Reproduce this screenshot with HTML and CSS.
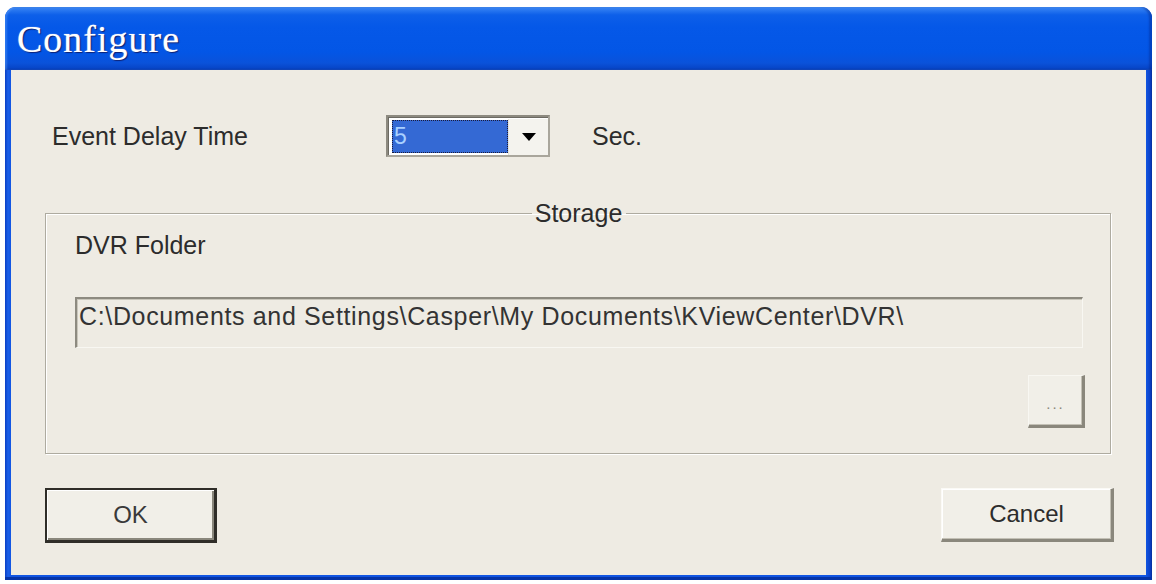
FILE: index.html
```html
<!DOCTYPE html>
<html>
<head>
<meta charset="utf-8">
<title>Configure</title>
<link rel="stylesheet" href="styles.css">
</head>
<body>
<div class="window">
  <div class="titlebar"><span class="title">Configure</span></div>
  <div class="client">
    <div class="row-delay">
      <span class="label">Event Delay Time</span>
      <div class="combo">
        <div class="combo-value"><span>5</span></div>
        <div class="combo-btn">
          <svg width="14" height="8" viewBox="0 0 14 8"><path d="M0 0 H14 L7 8 Z" fill="#000"/></svg>
        </div>
      </div>
      <span class="unit">Sec.</span>
    </div>
    <fieldset class="group">
      <legend>Storage</legend>
      <div class="field-label">DVR Folder</div>
      <div class="textbox">C:\Documents and Settings\Casper\My Documents\KViewCenter\DVR\</div>
      <div class="browse-row"><button class="btn browse">...</button></div>
    </fieldset>
    <div class="buttons">
      <button class="btn ok">OK</button>
      <button class="btn cancel">Cancel</button>
    </div>
  </div>
</div>
</body>
</html>
```

FILE: styles.css
```css
html, body {
  margin: 0;
  padding: 0;
  background: #ffffff;
}

body {
  font-family: "Liberation Sans", Arial, sans-serif;
  color: #2c2c2c;
}

.window {
  margin: 7px 0 0 5px;
  width: 1147px;
  height: 573px;
  box-sizing: border-box;
  border-radius: 11px 11px 0 0;
  background: linear-gradient(to right, #0a3fc4 0px, #1a5fe8 3px, #1155e2 6px, #1155e2 calc(100% - 6px), #0a40c8 calc(100% - 2px), #062e9a 100%);
  padding: 0 6px 5px 6px;
  display: flex;
  flex-direction: column;
  box-shadow: inset 0 -3px 0 #0534a8;
}

.titlebar {
  height: 63px;
  margin: 0 -6px;
  padding: 11px 0 0 12px;
  box-sizing: border-box;
  border-radius: 11px 11px 0 0;
  background: linear-gradient(to bottom, #3f8cf3 0px, #2a78f0 3px, #0d5fe9 8px, #0558e8 20px, #0356e6 45px, #0a52da 56px, #0746c8 61px, #063cb4 63px);
  box-shadow: inset -3px 0 2px rgba(0, 30, 120, 0.35), inset 2px 0 2px rgba(120, 180, 255, 0.35);
}

.title {
  font-family: "Liberation Serif", "Times New Roman", serif;
  font-size: 38px;
  line-height: 42px;
  letter-spacing: 1px;
  color: #ffffff;
  text-shadow: 1px 1px 1px #0b1f72, 0 0 1px #dfe8ff;
}

.client {
  flex: 1;
  background: #eeebe3;
  padding: 0 35px 0 34px;
  display: flex;
  flex-direction: column;
}

.row-delay {
  margin-top: 45px;
  height: 42px;
  display: flex;
  align-items: center;
  padding-left: 7px;
  font-size: 25px;
}

.label {
  width: 334px;
}

.combo {
  width: 164px;
  height: 42px;
  box-sizing: border-box;
  border: 2px solid #8d8a80;
  border-right-color: #a9a69c;
  border-bottom-color: #a9a69c;
  background: #ffffff;
  display: flex;
  padding: 3px 2px 2px 4px;
  box-shadow: inset 1px 1px 0 #6c6a62;
}

.combo-value {
  width: 116px;
  height: 33px;
  box-sizing: border-box;
  background: #3469d4;
  border: 1px dotted #1b1b3a;
  color: #a9d0ff;
  font-size: 23px;
  line-height: 31px;
  padding-left: 1px;
}

.combo-btn {
  flex: 1;
  display: flex;
  align-items: center;
  justify-content: center;
  background: #f4f3ee;
  margin: -1px -2px -2px 0;
  border-left: 1px solid #e4e2da;
}

.unit {
  margin-left: 42px;
}

.group {
  margin: 42px 0 0 0;
  padding: 3px 27px 25px 29px;
  border: 1px solid #aeaba0;
  box-shadow: inset 1px 1px 0 #ffffff, 1px 1px 0 #ffffff;
  min-width: 0;
}

.group legend {
  margin: 0 auto;
  padding: 0 4px 0 3px;
  font-size: 25px;
  line-height: 29px;
}

.field-label {
  font-size: 25px;
  line-height: 29px;
}

.textbox {
  margin-top: 37px;
  height: 51px;
  box-sizing: border-box;
  border-top: 2px solid #8d8a80;
  border-left: 2px solid #8d8a80;
  border-right: 1px solid #f8f7f2;
  border-bottom: 1px solid #f8f7f2;
  box-shadow: inset 1px 1px 0 #c9c6bb;
  background: #eeebe3;
  font-size: 25px;
  line-height: 29px;
  letter-spacing: 0.65px;
  padding: 3px 0 0 2px;
  white-space: nowrap;
  overflow: hidden;
  color: #333333;
}

.browse-row {
  display: flex;
  justify-content: flex-end;
  margin-top: 27px;
  margin-right: -2px;
}

.btn {
  font-family: "Liberation Sans", Arial, sans-serif;
  background: #f1efe8;
  color: #2c2c2c;
  padding: 0;
  margin: 0;
  box-sizing: border-box;
  cursor: default;
}

.browse {
  width: 57px;
  height: 53px;
  border: 1px solid #f8f7f2;
  border-right: 3px solid #8a877c;
  border-bottom: 3px solid #8a877c;
  box-shadow: inset -1px -1px 0 #c3c0b5;
  font-size: 15px;
  color: #8a877c;
  letter-spacing: 2px;
  padding-top: 6px;
}

.buttons {
  margin-top: 34px;
  margin-right: -3px;
  display: flex;
  justify-content: space-between;
}

.ok {
  width: 172px;
  height: 55px;
  border: 2px solid #2f2d28;
  border-right-width: 3px;
  border-bottom-width: 3px;
  box-shadow: inset 1px 1px 0 #ffffff, inset -2px -2px 0 #8a877c;
  font-size: 24px;
  color: #3a3a3a;
}

.cancel {
  width: 173px;
  height: 54px;
  border: 1px solid #fbfaf6;
  border-right: 3px solid #8a877c;
  border-bottom: 3px solid #8a877c;
  box-shadow: inset -1px -1px 0 #c3c0b5, inset 1px 1px 0 #ffffff;
  font-size: 24px;
  color: #2c2c2c;
}
```
